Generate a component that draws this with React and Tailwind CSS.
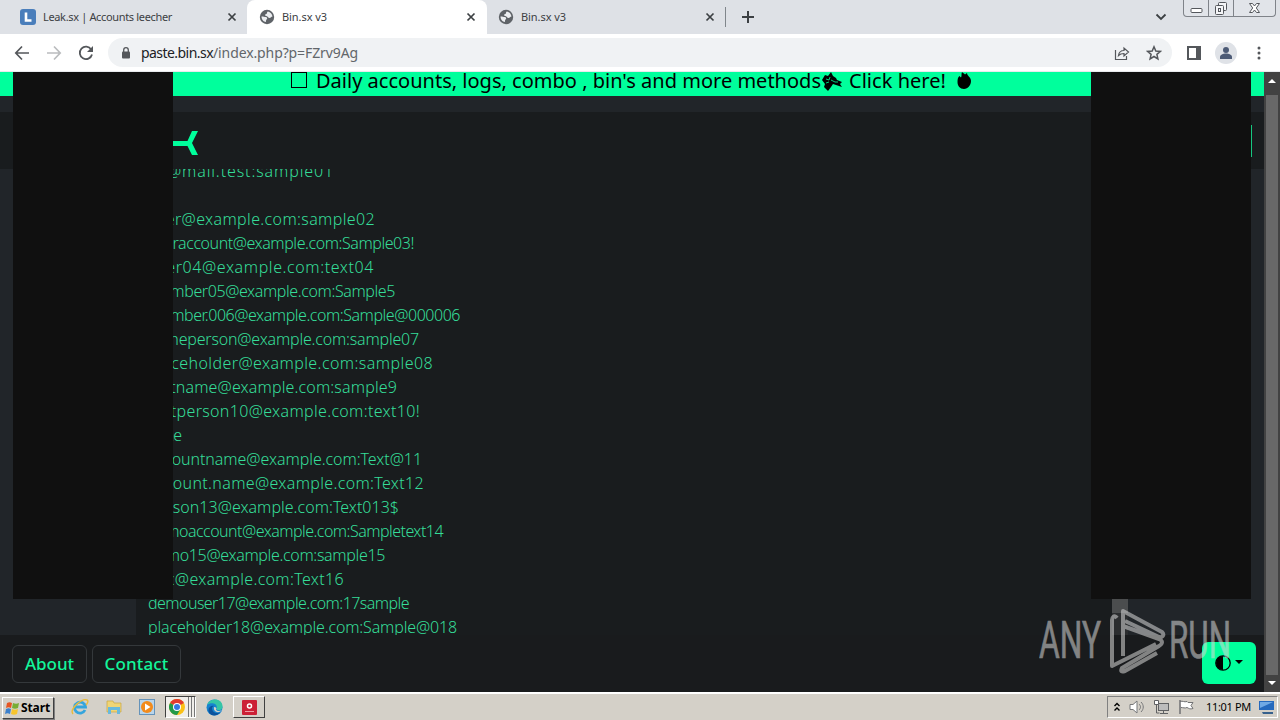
import { useLayoutEffect, useRef, useState } from 'react'
import clsx from 'clsx'

// Placeholder paste rows: text and rendered width in px
const ROWS = [
  { text: 'aa@mail.test:sample01', width: 186 },
  { text: '', width: 0 },
  { text: 'user@example.com:sample02', width: 227 },
  { text: 'useraccount@example.com:Sample03!', width: 266 },
  { text: 'user04@example.com:text04', width: 226 },
  { text: 'member05@example.com:Sample5', width: 247 },
  { text: 'member.006@example.com:Sample@000006', width: 312 },
  { text: 'someperson@example.com:sample07', width: 271 },
  { text: 'placeholder@example.com:sample08', width: 285 },
  { text: 'testname@example.com:sample9', width: 249 },
  { text: 'testperson10@example.com:text10!', width: 272 },
  { text: 'none', width: 33 },
  { text: 'accountname@example.com:Text@11', width: 274 },
  { text: 'account.name@example.com:Text12', width: 276 },
  { text: 'person13@example.com:Text013$', width: 251 },
  { text: 'demoaccount@example.com:Sampletext14', width: 295 },
  { text: 'demo15@example.com:sample15', width: 237 },
  { text: 'abc@example.com:Text16', width: 196 },
  { text: 'demouser17@example.com:17sample', width: 261 },
  { text: 'placeholder18@example.com:Sample@018', width: 309 },
]

/** Single line of text, tracked so that it spans the given width. */
function Fit({ text, width, className }) {
  const ref = useRef(null)
  const [spacing, setSpacing] = useState(0)

  useLayoutEffect(() => {
    if (!text) return
    const natural = ref.current.getBoundingClientRect().width
    setSpacing((width - natural) / text.length)
  }, [])

  return (
    <span ref={ref} className={clsx('inline-block whitespace-pre', className)} style={{ letterSpacing: spacing }}>
      {text}
    </span>
  )
}

function Globe() {
  return (
    <svg width="16" height="16" viewBox="0 0 16 16" className="shrink-0">
      <circle cx="8" cy="8" r="7.200" fill="#5f6368" />
      <path d="M2.500 7.500c2 0 3 .5 4.500.5 1.500.5 1.500 2 .5 2.500-.5.500-.5 1-.5 2.500C4.500 12.800 2.500 10.500 2.500 7.500z" fill="#eceef1" />
      <path d="M9 2.500c2.500.5 4 2.500 4.500 5-1.500 0-1.500 1.500-3 1.500S9 7.500 8 7.200 6 7 6 6s2-.7 2-1.700S8 3 9 2.500z" fill="#eceef1" />
    </svg>
  )
}

function Close() {
  return (
    <svg width="10" height="10" viewBox="0 0 10 10" className="shrink-0">
      <path d="M1.500 1.500l7 7M8.500 1.500l-7 7" stroke="#3c4043" strokeWidth="1.700" />
    </svg>
  )
}

function TabStrip() {
  return (
    <div className="h-[34px] bg-[#dee1e6] flex pl-2 text-[11px] text-[#3c4043]">
      <div className="w-[239px] flex items-center pl-3 pr-2.5">
        <svg width="16" height="16" viewBox="0 0 16 16" className="shrink-0">
          <rect width="16" height="16" rx="3" fill="#4a7ebb" />
          <path d="M6 3.500v8h5.500" fill="none" stroke="#fff" strokeWidth="2.600" />
        </svg>
        <div className="flex-1 pl-[7px]"><Fit text="Leak.sx | Accounts leecher" width={129} /></div>
        <Close />
      </div>
      <div className="w-[240px] bg-white rounded-t-lg flex items-center pl-3 pr-[11px]">
        <Globe />
        <div className="flex-1 pl-[7px]"><Fit text="Bin.sx v3" width={45} /></div>
        <Close />
      </div>
      <div className="w-[239px] flex items-center pl-[11px] pr-[11px]">
        <Globe />
        <div className="flex-1 pl-[7px]"><Fit text="Bin.sx v3" width={45} /></div>
        <Close />
      </div>
      <div className="w-px h-5 bg-[#80868b] mt-[7px] -ml-px" />
      <svg width="14" height="14" viewBox="0 0 14 14" className="ml-[15px] mt-[10px]">
        <path d="M7 1v12M1 7h12" stroke="#3c4043" strokeWidth="2" />
      </svg>
      <div className="flex-1" />
      <svg width="12" height="10" viewBox="0 0 12 10" className="mt-3 mr-4">
        <path d="M1.500 2.500L6 7l4.500-4.500" fill="none" stroke="#3c4043" strokeWidth="1.800" />
      </svg>
      <div className="flex h-[17px] w-[93px] mr-1 border border-t-0 border-[#7f8389] rounded-b-sm bg-[#e1e4e9]">
        <div className="w-[25px] border-r border-[#7f8389] flex justify-center">
          <svg width="13" height="17"><rect x="1" y="8.500" width="11" height="4" rx="1" fill="#fff" stroke="#54575c" /></svg>
        </div>
        <div className="w-[25px] border-r border-[#7f8389] flex justify-center">
          <svg width="14" height="17" fill="#f4f5f7" stroke="#54575c">
            <rect x="4.500" y="2.500" width="8" height="8" rx="1" />
            <rect x="1.500" y="5.500" width="8" height="9" rx="1" />
            <rect x="4.500" y="8.500" width="2" height="3" />
          </svg>
        </div>
        <div className="flex-1 flex justify-center">
          <svg width="13" height="17">
            <path d="M1.500 3.500h3l2 2.500 2-2.500h3L8.300 8l3.200 4.500h-3l-2-2.500-2 2.500h-3L4.700 8z" fill="#fff" stroke="#54575c" />
          </svg>
        </div>
      </div>
    </div>
  )
}

function Toolbar() {
  return (
    <div className="h-[38px] bg-white flex items-center pl-3.5 pr-3 border-b border-[#e8eaed]">
      <svg width="16" height="16" viewBox="0 0 16 16" fill="none" stroke="#54575b" strokeWidth="1.700">
        <path d="M15 8H2M8 1.500L1.800 8 8 14.500" />
      </svg>
      <svg width="16" height="16" viewBox="0 0 16 16" fill="none" stroke="#babcbe" strokeWidth="1.700" className="ml-4">
        <path d="M1 8h13M8 1.500L14.200 8 8 14.500" />
      </svg>
      <svg width="16" height="16" viewBox="0 0 16 16" className="ml-4">
        <path d="M13.200 4.500A6.200 6.200 0 1 0 14 9.500" fill="none" stroke="#54575b" strokeWidth="1.800" />
        <path d="M15 1v6H9z" fill="#54575b" />
      </svg>
      <div className="ml-[14px] h-[29px] w-[1064px] rounded-full bg-[#f0f2f4] flex items-center pl-3 pr-[10px]">
        <svg width="12" height="14" viewBox="0 0 12 14">
          <rect x="2" y="5.500" width="8" height="7" rx="1" fill="#54575b" />
          <path d="M3.700 6V4a2.300 2.300 0 0 1 4.600 0v2" fill="none" stroke="#54575b" strokeWidth="1.300" />
        </svg>
        <div className="flex-1 pl-[9px] text-sm text-[#62666a]">
          <Fit text="paste.bin.sx" width={72} className="text-[#202124]" />
          <Fit text="/index.php?p=FZrv9Ag" width={145} />
        </div>
        <svg width="16" height="16" viewBox="0 0 16 16" fill="none" stroke="#54575b" strokeWidth="1.200">
          <path d="M1.500 5v9.500h11V11M4.500 10.500C5 7 7 5.500 10 5.500V3l4.500 4-4.500 4V8.500c-2.500 0-4 .5-5.500 2z" />
        </svg>
        <svg width="16" height="16" viewBox="0 0 16 16" fill="none" stroke="#54575b" strokeWidth="1.500" className="ml-4">
          <path d="M8 1.800l1.800 4.200 4.600.4-3.500 3 1 4.500L8 11.500l-3.900 2.400 1-4.500-3.500-3 4.600-.4z" />
        </svg>
      </div>
      <svg width="15" height="14" className="ml-[15px]">
        <rect x="1" y="1" width="12" height="12" fill="none" stroke="#54575b" strokeWidth="2" />
        <path d="M9 1h5v12H9z" fill="#54575b" />
      </svg>
      <svg width="22" height="22" viewBox="0 0 22 22" className="ml-[13px]">
        <circle cx="11" cy="11" r="11" fill="#dfe2e7" />
        <circle cx="11" cy="8" r="3" fill="#4d5b76" />
        <path d="M5 17v-2c0-2 3-3.500 6-3.500s6 1.500 6 3.500v2z" fill="#4d5b76" />
      </svg>
      <svg width="4" height="14" fill="#54575b" className="ml-5">
        <circle cx="2" cy="2" r="1.500" />
        <circle cx="2" cy="7" r="1.500" />
        <circle cx="2" cy="12" r="1.500" />
      </svg>
    </div>
  )
}

function Banner() {
  return (
    <div className="h-6 shrink-0 bg-[#00ff9c] text-black text-[20px] leading-[17px] flex pl-[291px]">
      <div className="w-4 h-4 border border-black" />
      <Fit text="Daily accounts, logs, combo , bin's and more methods" width={505} className="ml-[9px]" />
      <svg width="21" height="20" viewBox="0 0 21 20">
        <path d="M1 8l3-5 3 1 3-4 2 4 3 2 1 2 5 2-2 2 2 3-6-2-3-1-2 3-3 4-4-4 1-3z" />
        <path d="M5 7l3 1 1-3M10 8l4 2 3 0M5 11l3-1" fill="none" stroke="#00ff9c" strokeWidth=".8" />
      </svg>
      <Fit text="Click here!" width={97} className="ml-[7px]" />
      <svg width="16" height="18" viewBox="0 0 16 18" className="ml-[10px]">
        <path d="M6 0c1 1.500 2 1 3 2.500l2-1.500c0 3 4 4 4 8 0 4-3 8-7 8s-6.500-3-6.500-7c0-3 .5-5 2-6l1.500 1.500C6 4 5 2 6 0z" />
      </svg>
    </div>
  )
}

function Site() {
  return (
    <div className="relative flex-1 h-[620px] flex flex-col bg-[#212529] overflow-hidden text-[#35dc98]">
      <Banner />
      <div className="mt-4 h-[57px] shrink-0 bg-[#191c1e] flex items-center justify-between">
        <svg width="60" height="26" viewBox="0 0 60 26" className="ml-[138px] mt-1">
          <path d="M30 11h19.500L54 1h6l-6 12 6 12h-6l-4.500-9H30z" fill="#00ff9c" />
        </svg>
        <div className="w-10 h-8 mr-3 border border-[#16c781]" />
      </div>
      <div className="flex-1 min-h-0 mx-[136px] pl-3 bg-[#191c1e] flex justify-between overflow-hidden">
        <div className="-mt-[10px] text-base leading-6 font-light">
          {ROWS.map((row) => (
            <div key={row.text} className="h-6">
              <Fit text={row.text} width={row.width} />
            </div>
          ))}
        </div>
        <div className="w-4 bg-[#2b2d2f] flex items-end">
          <div className="w-4 h-[44px] mb-[22px] bg-[#4b4d4e]" />
        </div>
      </div>
      <div className="h-[57px] shrink-0 bg-[#191b1d] flex items-center pl-3 pr-2 gap-[5px] text-[#13f59b] text-[17px] font-medium">
        <div className="w-[75px] h-[38px] border border-[#34383b] rounded-md flex items-center justify-center">
          <Fit text="About" width={49} />
        </div>
        <div className="w-[89px] h-[38px] border border-[#34383b] rounded-md flex items-center justify-center">
          <Fit text="Contact" width={64} />
        </div>
        <div className="flex-1" />
        <div className="w-[54px] h-[42px] mb-0.5 rounded-md bg-[#00ff9c] flex items-center justify-center gap-1">
          <svg width="16" height="16" viewBox="0 0 16 16">
            <circle cx="8" cy="8" r="7.200" fill="none" stroke="#000" strokeWidth="1.300" />
            <path d="M8 1a7 7 0 0 0 0 14z" />
          </svg>
          <svg width="8" height="5"><path d="M0 0h8L4 4z" /></svg>
        </div>
      </div>

      {/* Side ads */}
      <div className="absolute left-[13px] top-0 w-40 h-[527px] bg-[#101010]" />
      <div className="absolute left-[1091px] top-0 w-40 h-[527px] bg-[#101010]" />

      {/* Watermark */}
      <div className="absolute left-[1039px] top-[534px] w-[195px] h-[72px] opacity-55">
        <svg width="195" height="72" viewBox="0 0 195 72" fill="none" stroke="#d8d8d8">
          <g fill="#d8d8d8" stroke="#d8d8d8" strokeWidth=".7" fontFamily="Roboto" fontSize="52">
            <text x="0" y="52" textLength="62" lengthAdjust="spacingAndGlyphs">ANY</text>
            <text x="130" y="52" textLength="62" lengthAdjust="spacingAndGlyphs">RUN</text>
          </g>
          <path d="M84 50V5l39 21c3 3 0 6-3 5L86 15M78 12c-3-4-5 0-5 2v46l44-22M84 20l36 13c4 2 4 4 0 7L83 62c-2 4 0 4 3 3l32-18" strokeWidth="4" strokeLinejoin="round" />
        </svg>
      </div>
    </div>
  )
}

function Scrollbar() {
  return (
    <div className="w-4 bg-[#424242] flex flex-col items-center">
      <svg width="16" height="23"><path d="M4 11h8L8 7z" fill="#fff" /></svg>
      <div className="w-3 flex-1 bg-[#686868]" />
      <svg width="16" height="17"><path d="M4 6h8l-4 4z" fill="#fff" /></svg>
    </div>
  )
}

function Taskbar() {
  return (
    <div className="h-7 bg-[#d4d0c8] border-t-2 border-white flex items-center pl-0.5 pb-0.5 text-black">
      <div className="w-[52px] h-[22px] mt-1 border border-white border-r-[#404040] border-b-[#404040] shadow-[1px_1px_0_#808080] flex items-center pl-0.5 text-xs font-bold">
        <svg width="15" height="15" viewBox="0 0 15 15" className="mr-px">
          <path d="M2 2c2-1 3-1 5 0L6 7C4 6 3 6 1 7z" fill="#e65522" />
          <path d="M8 2c2 1 4 1 6 0l-1 5c-2 1-4 1-6 0z" fill="#78ad35" />
          <path d="M1 8c2-1 3-1 5 0l-1 5c-2-1-3-1-5 0z" fill="#3c80cc" />
          <path d="M7 8c2 1 4 1 6 0l-1 5c-2 1-4 1-6 0z" fill="#f7c52d" />
        </svg>
        <Fit text="Start" width={29} />
      </div>
      <svg width="18" height="18" viewBox="0 0 18 18" className="ml-[17px] mt-0.5">
        <path d="M14 12a5.500 5.500 0 1 1 .5-3H5" fill="none" stroke="#35a5dd" strokeWidth="2.800" />
        <path d="M2 16c-4-5 9-16 14-14 2 1 0 4-1 5" fill="none" stroke="#e9bb3c" strokeWidth="1.400" />
      </svg>
      <svg width="18" height="18" viewBox="0 0 18 18" className="ml-4 mt-0.5">
        <path d="M2 3h6l1 2h7v9H2z" fill="#f0d576" stroke="#c7a844" strokeWidth=".7" />
        <path d="M3 9h12v7h-3v-4H6v4H3z" fill="#69b9dd" />
      </svg>
      <svg width="16" height="16" viewBox="0 0 16 16" className="ml-4 mt-0.5">
        <rect x=".5" y=".5" width="15" height="15" fill="#b9d5eb" stroke="#6593ba" />
        <circle cx="8" cy="8" r="6" fill="#f28b1c" />
        <path d="M6 4.500v7L11.500 8z" fill="#fff" />
      </svg>
      <div className="ml-2.5 mt-0.5 w-[31px] h-[22px] border border-[#404040] border-b-white border-r-white bg-[#f0eeea] flex items-center pl-[3px]">
        <svg width="16" height="16" viewBox="0 0 16 16" className="shrink-0">
          <circle cx="8" cy="8" r="8" fill="#fbc116" />
          <path d="M8 8L1.070 4A8 8 0 0 1 14.930 4z" fill="#e33b2e" />
          <path d="M8 8L1.070 4A8 8 0 0 0 8 16l3-5z" fill="#229a4a" />
          <circle cx="8" cy="8" r="4" fill="#fff" />
          <circle cx="8" cy="8" r="3" fill="#3778e0" />
        </svg>
        <div className="ml-[3px] w-1 h-5 border-x border-[#777]" />
        <div className="ml-[2px] w-px h-5 bg-[#777]" />
      </div>
      <svg width="17" height="17" viewBox="0 0 17 17" className="ml-[10px] mt-0.5">
        <circle cx="8.500" cy="8.500" r="8" fill="#1683cf" />
        <path d="M1 6C4-2 17-1 16.500 8c-.5 4-5 4-6 2 2-6-6-7-9.500-4z" fill="#35c5a6" />
        <path d="M6 9c0 4 4 6 8 4.500-3 4-9 4-11 0C1 9 5 6 8 7c-1 0-2 1-2 2z" fill="#0c539d" />
        <path d="M8 8c2 0 3 1 2 2.500 1 2 4 2 6 .5-3 4-9 2-8-3z" fill="#d4d0c8" />
      </svg>
      <div className="ml-2.5 mt-0.5 w-8 h-[22px] border border-white border-r-[#404040] border-b-[#404040] flex items-center justify-center">
        <svg width="15" height="15">
          <rect width="15" height="15" rx="1" fill="#cc2036" />
          <circle cx="7.500" cy="6" r="2" fill="none" stroke="#fff" strokeWidth="1.500" />
          <path d="M3 11.500h9" stroke="#ef9ca5" />
        </svg>
      </div>
      <div className="flex-1" />
      <div className="w-[171px] h-[22px] mt-0.5 mr-0.5 border border-[#808080] border-b-white border-r-white flex items-center pl-1.5 text-[11px]">
        <svg width="6" height="10" fill="none" stroke="#000" strokeWidth="1.400"><path d="M.5 4L3 1.500 5.500 4M.5 8.500L3 6l2.500 2.500" /></svg>
        <svg width="17" height="16" viewBox="0 0 17 16" fill="none" stroke="#77787a" className="ml-[9px]">
          <path d="M1 5.500h3L8 2v12l-4-3.500H1z" fill="#fff" />
          <path d="M10 5c2 2 2 4 0 6M12 3c3 3 3 7 0 10" />
        </svg>
        <svg width="17" height="16" viewBox="0 0 17 16" fill="none" stroke="#606163" className="ml-[7px]">
          <rect x="5.500" y="4.500" width="10" height="7" fill="#bcbcbc" />
          <path d="M7 14.500h8M10.500 12v2M3.500 6v8h3" />
          <path d="M1.500 1.500h4v4h-4z" fill="#fff" />
        </svg>
        <svg width="17" height="16" viewBox="0 0 17 16" fill="#fff" stroke="#707173" className="ml-2">
          <path d="M2 2.500c3-1 4 1 7 0l1 1h5l-2 3 2 3c-3 1-4 0-6-1-2 1-4 0-6 0" />
          <path d="M2 1v14" strokeWidth="1.500" />
        </svg>
        <Fit text="11:01 PM" width={45} className="ml-[11px]" />
        <svg width="16" height="14" viewBox="0 0 16 14" className="ml-[8px]">
          <path d="M0 1h15v9H0z" fill="#2569bd" />
          <path d="M1 2h13L1 8z" fill="#70a9e4" />
          <path d="M3 12h11v2H4z" fill="#37618d" />
        </svg>
      </div>
    </div>
  )
}

export default function App() {
  return (
    <div className="w-[1280px] h-[720px] flex flex-col overflow-hidden font-['Noto_Sans','Open_Sans',sans-serif]">
      <TabStrip />
      <Toolbar />
      <div className="flex h-[620px] shrink-0">
        <Site />
        <Scrollbar />
      </div>
      <Taskbar />
    </div>
  )
}
